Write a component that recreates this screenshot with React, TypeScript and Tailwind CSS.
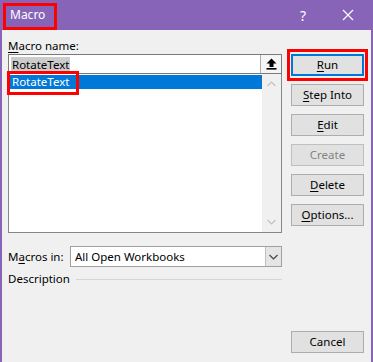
import React from 'react';

const Btn: React.FC<{ label: React.ReactNode; primary?: boolean; disabled?: boolean }> = ({ label, primary, disabled }) => (
  <div
    className={`h-[22px] w-[73px] flex items-center justify-center bg-[#e1e1e1] ${
      primary ? 'border-2 border-[#0078d7]' : disabled ? 'border border-[#bfbfbf] text-[#838383]' : 'border border-[#adadad]'
    }`}
  >
    {label}
  </div>
);

const U: React.FC<{ children: React.ReactNode }> = ({ children }) => <span className="underline underline-offset-2">{children}</span>;

const Chevron: React.FC<{ up?: boolean; color: string }> = ({ up, color }) => (
  <svg width="9" height="6" viewBox="0 0 9 6">
    <path d={up ? 'M0.5 5 L4.5 1 L8.5 5' : 'M0.5 1 L4.5 5 L8.5 1'} fill="none" stroke={color} strokeWidth="1.2" />
  </svg>
);

export default function App() {
  return (
    <div className="w-[373px] h-[362px] flex flex-col font-['Noto_Sans',sans-serif] text-[11.5px] text-black select-none">
      {/* Title bar */}
      <div className="relative h-[30px] shrink-0 bg-[#8764b8] flex items-center text-white">
        <span className="pl-[10px] text-[12px]">Macro</span>
        <div className="absolute left-[3px] top-[3px] w-[54px] h-[27px] border-[3px] border-[#ff0000]" />
        <div className="ml-auto flex items-center">
          <span className="text-[14px] mr-[36px]">?</span>
          <svg width="12" height="12" viewBox="0 0 12 12" className="mr-[19px]">
            <path d="M1 1 L11 11 M11 1 L1 11" stroke="white" strokeWidth="1.2" />
          </svg>
        </div>
      </div>

      {/* Body */}
      <div className="flex-1 flex flex-col bg-[#f0f0f0] border-x-2 border-[#8764b8]">
        <div className="flex pl-[6px] pr-[7px] gap-[9px]">
          {/* Left column */}
          <div className="w-[274px] flex flex-col pt-[8px]">
            <div className="h-[16px] leading-[16px]">
              <U>M</U>acro name:
            </div>
            <div className="h-[20px] flex bg-white border border-[#7a7a7a]">
              <div className="flex-1 flex items-center pl-[2px]">
                <span className="bg-[#cccccc] leading-[15px] px-[1px]">RotateText</span>
              </div>
              <div className="w-[21px] flex items-center justify-center border-l border-[#adadad] bg-[#f5f5f5]">
                <svg width="11" height="12" viewBox="0 0 11 12">
                  <path d="M5.5 0.5 L10.5 5.5 L7.5 5.5 L7.5 9 L3.5 9 L3.5 5.5 L0.5 5.5 Z" fill="black" />
                  <rect x="0.5" y="10" width="10" height="1.6" fill="black" />
                </svg>
              </div>
            </div>
            <div className="relative h-[159px] flex bg-white border border-t-0 border-[#828790]">
              <div className="flex-1 pt-[1px]">
                <div className="h-[14px] leading-[14px] bg-[#0078d7] text-white pl-[3px]">RotateText</div>
              </div>
              <div className="w-[19px] bg-[#f0f0f0] flex flex-col items-center justify-between py-[7px]">
                <Chevron up color="#c2c2c2" />
                <Chevron color="#c2c2c2" />
              </div>
              <div className="absolute left-[-2px] top-[-3px] w-[72px] h-[24px] border-[3px] border-[#ff0000]" />
            </div>
            <div className="mt-[13px] flex items-center h-[21px]">
              <span className="w-[62px]">
                M<U>a</U>cros in:
              </span>
              <div className="flex-1 h-[21px] flex bg-white border border-[#a0a0a0]">
                <div className="flex-1 flex items-center pl-[4px]">All Open Workbooks</div>
                <div className="w-[16px] flex items-center justify-center bg-[#e5e5e5] border-l border-[#c0c0c0]">
                  <Chevron color="#444444" />
                </div>
              </div>
            </div>
            <div className="mt-[4px] h-[16px] flex items-center">
              <span>Description</span>
              <div className="flex-1 ml-[6px] h-px bg-[#d5d5d5]" />
            </div>
          </div>

          {/* Right column */}
          <div className="w-[73px] flex flex-col gap-[8px] pt-[24px]">
            <div className="relative">
              <Btn primary label={<><U>R</U>un</>} />
              <div className="absolute left-[-4px] top-[-5px] w-[81px] h-[32px] border-[3px] border-[#ff0000]" />
            </div>
            <Btn label={<><U>S</U>tep Into</>} />
            <Btn label={<><U>E</U>dit</>} />
            <Btn disabled label="Create" />
            <Btn label={<><U>D</U>elete</>} />
            <Btn label={<><U>O</U>ptions...</>} />
          </div>
        </div>

        <div className="mt-auto flex justify-end pr-[7px] pb-[9px]">
          <Btn label="Cancel" />
        </div>
      </div>
    </div>
  );
}
